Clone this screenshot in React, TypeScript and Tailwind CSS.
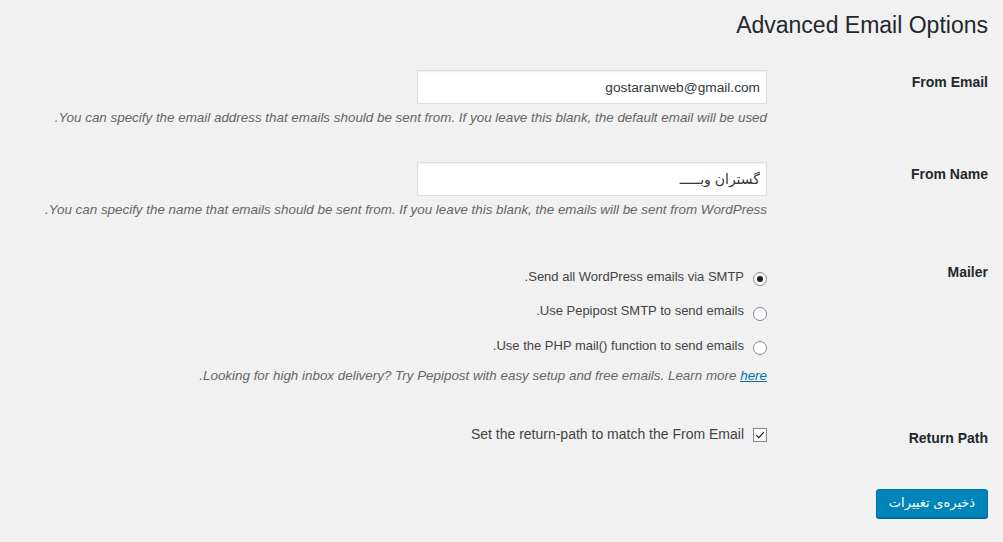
import React from "react";

const MAILERS = [
  { id: "smtp", text: "Send all WordPress emails via SMTP.", checked: true },
  { id: "pepipost", text: "Use Pepipost SMTP to send emails.", checked: false },
  { id: "mail", text: "Use the PHP mail() function to send emails.", checked: false },
];

function Radio({ checked }: { checked: boolean }) {
  return (
    <span className="mt-[6px] flex h-[14px] w-[14px] shrink-0 items-center justify-center rounded-full border border-[#7e8993] bg-white">
      {checked && <span className="h-[6px] w-[6px] rounded-full bg-[#1e1e1e]" />}
    </span>
  );
}

function Row({ label, labelPad, children }: { label: string; labelPad: string; children: React.ReactNode }) {
  return (
    <div className="flex">
      <div className={`w-[221px] shrink-0 text-[14px] font-bold leading-[20px] text-[#23282d] ${labelPad}`}>{label}</div>
      <div className="flex-1">{children}</div>
    </div>
  );
}

export default function App() {
  return (
    <div dir="rtl" className="min-h-screen bg-[#f1f1f1] pr-[15px] text-[#444] font-['Liberation_Sans','DejaVu_Sans',sans-serif]">
      <h1 className="pt-[10px] text-[23px] font-normal leading-[30px] text-[#23282d]">Advanced Email Options</h1>

      {/* From Email */}
      <div className="mt-[30px]">
        <Row label="From Email" labelPad="pt-[2px]">
          <input readOnly value="gostaranweb@gmail.com"
            className="block h-[34px] w-[350px] border border-[#ddd] bg-white px-[6px] text-[13.7px] text-[#32373c] shadow-[inset_0_1px_2px_rgba(0,0,0,0.07)] outline-none" />
          <p className="mt-[4px] text-[13.4px] italic leading-[20px] text-[#666]">
            You can specify the email address that emails should be sent from. If you leave this blank, the default email will be used.
          </p>
        </Row>
      </div>

      {/* From Name */}
      <div className="mt-[34px]">
        <Row label="From Name" labelPad="pt-[2px]">
          <input readOnly value="گستران وبـــــ"
            className="block h-[34px] w-[350px] border border-[#ddd] bg-white px-[6px] text-[14px] text-[#32373c] shadow-[inset_0_1px_2px_rgba(0,0,0,0.07)] outline-none" />
          <p className="mt-[4px] text-[13.4px] italic leading-[20px] text-[#666]">
            You can specify the name that emails should be sent from. If you leave this blank, the emails will be sent from WordPress.
          </p>
        </Row>
      </div>

      {/* Mailer */}
      <div className="mt-[39px]">
        <Row label="Mailer" labelPad="pt-[3px]">
          {MAILERS.map(m => (
            <div key={m.id} className="flex h-[34.5px] items-center gap-[9px] text-[13px] text-[#444]">
              <Radio checked={m.checked} />
              <span>{m.text}</span>
            </div>
          ))}
          <p className="mt-[3px] text-[13.4px] italic leading-[20px] text-[#666]">
            Looking for high inbox delivery? Try Pepipost with easy setup and free emails. Learn more{" "}
            <a className="text-[#0073aa] underline">here</a>.
          </p>
        </Row>
      </div>

      {/* Return Path */}
      <div className="mt-[39px]">
        <Row label="Return Path" labelPad="pt-[3px]">
          <div className="flex h-[20px] items-center gap-[9px] text-[14px] text-[#444]">
            <span className="flex h-[14px] w-[14px] shrink-0 items-center justify-center border border-[#7e8993] bg-white">
              <svg viewBox="0 0 12 12" className="h-[10px] w-[10px]" fill="none" stroke="#1e1e1e" strokeWidth="1.4">
                <path d="M1.5 6.2 L4.6 9.2 L10.6 2.6" />
              </svg>
            </span>
            <span>Set the return-path to match the From Email</span>
          </div>
        </Row>
      </div>

      <div className="mt-[41px] flex">
        <button className="h-[29px] w-[112px] rounded-[3px] border border-[#0073aa] bg-[#0085ba] text-[13px] text-white shadow-[0_1px_0_#006799]">
          ذخیره‌ی تغییرات
        </button>
      </div>
    </div>
  );
}
